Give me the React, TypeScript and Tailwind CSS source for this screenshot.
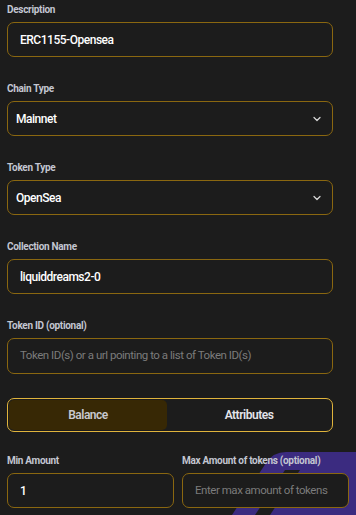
import { ChevronDown } from 'lucide-react';

const font = { fontFamily: 'Roboto, "Liberation Sans", sans-serif' };

function Label({ children }: { children: React.ReactNode }) {
  return (
    <div className="text-[10px] leading-[12px] font-bold tracking-[-0.03em] text-[#c3c6d1] mb-[6px]">
      {children}
    </div>
  );
}

function TextField({ label, value, placeholder }: { label: string; value?: string; placeholder?: string }) {
  return (
    <div className="mb-[26px] w-[326px]">
      <Label>{label}</Label>
      <div className="h-[35px] rounded-[7px] border border-[#8a6710] flex items-center px-[12px]">
        {value ? (
          <span className="text-[12px] font-medium tracking-[-0.04em] text-white">{value}</span>
        ) : (
          <span className="text-[11.5px] tracking-[-0.04em] text-[#7b7b7b]">{placeholder}</span>
        )}
      </div>
    </div>
  );
}

function SelectField({ label, value }: { label: string; value: string }) {
  return (
    <div className="mb-[26px] w-[326px]">
      <Label>{label}</Label>
      <div className="h-[35px] rounded-[7px] border border-[#8a6710] flex items-center justify-between pl-[8px] pr-[9px]">
        <span className="text-[12px] font-medium tracking-[-0.04em] text-white">{value}</span>
        <ChevronDown size={12} strokeWidth={2.5} className="text-[#d6d6d6]" />
      </div>
    </div>
  );
}

export default function App() {
  return (
    <div className="relative w-[356px] h-[515px] overflow-hidden bg-[#1c1c1c]" style={font}>
      {/* decorative purple shape in the corner */}
      <svg className="absolute right-0 bottom-0" width="126" height="65" viewBox="0 0 126 65">
        <path d="M2 65 L36 13 Q43 2 56 2 L126 2 L126 65 Z" fill="#3b2b80" />
        <path d="M25 65 L40 65 L70 20 L55 20 Z" fill="#1c1c1c" />
      </svg>

      <div className="relative px-[7px] pt-[4px]">
        <TextField label="Description" value="ERC1155-Opensea" />
        <SelectField label="Chain Type" value="Mainnet" />
        <SelectField label="Token Type" value="OpenSea" />
        <TextField label="Collection Name" value="liquiddreams2-0" />
        <div className="mb-[24px] w-[326px]">
          <Label>Token ID (optional)</Label>
          <div className="h-[36px] rounded-[7px] border border-[#8a6710] flex items-center px-[12px]">
            <span className="text-[11.5px] tracking-[-0.04em] text-[#7b7b7b]">Token ID(s) or a url pointing to a list of Token ID(s)</span>
          </div>
        </div>

        <div className="w-[326px] h-[34px] rounded-[7px] border border-[#e0b43c] flex p-[1px] mb-[23px]">
          <div className="w-[158px] rounded-[5px] bg-[#372805] flex items-center justify-center text-[12px] font-semibold tracking-[-0.04em] text-[#c9c9cf]">
            Balance
          </div>
          <div className="flex-1 flex items-center justify-center text-[12px] font-semibold tracking-[-0.04em] text-[#e4e4ea]">
            Attributes
          </div>
        </div>

        <div className="flex gap-[8px]">
          <div className="w-[167px]">
            <Label>Min Amount</Label>
            <div className="h-[35px] rounded-[7px] border border-[#8a6710] flex items-center px-[12px] bg-[#1c1c1c]">
              <span className="text-[12px] font-medium text-white">1</span>
            </div>
          </div>
          <div className="w-[167px]">
            <Label>Max Amount of tokens (optional)</Label>
            <div className="h-[35px] rounded-[7px] border border-[#8a6710] flex items-center px-[12px] bg-[#1c1c1c]">
              <span className="text-[11.5px] tracking-[-0.04em] whitespace-nowrap text-[#7b7b7b]">Enter max amount of tokens</span>
            </div>
          </div>
        </div>
      </div>
    </div>
  );
}
